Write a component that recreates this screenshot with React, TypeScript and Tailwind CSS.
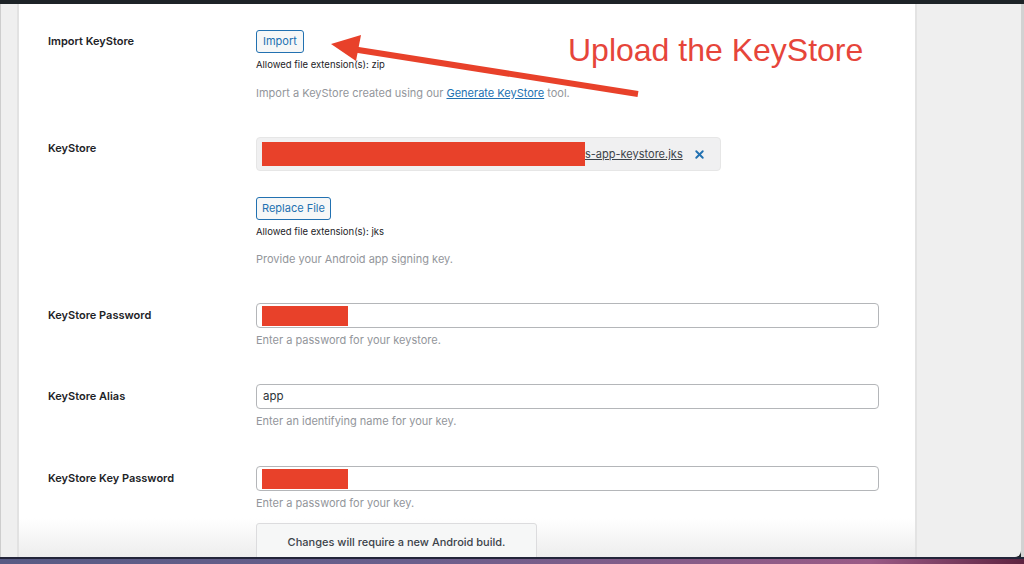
import { X } from 'lucide-react'

const font = { fontFamily: 'Inter, "Liberation Sans", sans-serif' }

function Label({ text, h }: { text: string; h: string }) {
  return (
    <div className={`w-[208px] shrink-0 flex items-center text-[11px] font-semibold text-[#1d2327] ${h}`}>
      {text}
    </div>
  )
}

function Redacted({ w }: { w: string }) {
  return <div className={`h-[20px] bg-[#e8412a] ${w}`} />
}

export default function App() {
  return (
    <div className="relative w-[1024px] h-[564px] overflow-hidden flex flex-col bg-[#1d2327]" style={font}>
      {/* top admin bar edge */}
      <div className="h-[4px] shrink-0 bg-[#1d2327]" />

      <div className="flex flex-1 min-h-0">
        {/* left menu strip */}
        <div className="w-[19px] shrink-0 bg-[#efefef] border-l border-[#cdcdcd] border-r-2 border-r-[#e2e2e2]" />

        {/* main settings panel */}
        <div className="w-[896px] shrink-0 bg-[linear-gradient(to_bottom,#ffffff_0%,#ffffff_93%,#ededed_100%)] pl-[29px] pt-[26px]">
          {/* import keystore */}
          <div className="flex">
            <Label text="Import KeyStore" h="h-[23px]" />
            <div className="flex flex-col items-start">
              <button className="h-[23px] px-[6px] rounded-[3px] border border-[#2271b1] bg-[#f6f7f7] text-[11px] text-[#2271b1]">
                Import
              </button>
              <p className="mt-[5px] text-[9.5px] leading-[13px] text-[#1d2327]">Allowed file extension(s): zip</p>
              <p className="mt-[14px] text-[11px] leading-[16px] text-[#93969b]">
                Import a KeyStore created using our{' '}
                <span className="text-[#2271b1] underline">Generate KeyStore</span> tool.
              </p>
            </div>
          </div>

          {/* keystore file */}
          <div className="flex mt-[36px]">
            <Label text="KeyStore" h="h-[22px]" />
            <div className="flex flex-col items-start">
              <div className="w-[465px] h-[34px] rounded-[4px] bg-[#f0f0f1] border border-[#e6e6e6] flex items-center pl-[5px] pr-[14px]">
                <div className="w-[323px] h-[24px] bg-[#e8412a]" />
                <span className="text-[11px] text-[#3c434a] underline">s-app-keystore.jks</span>
                <X size={13} strokeWidth={3.5} className="ml-auto text-[#2271b1]" />
              </div>
              <button className="mt-[26px] h-[23px] px-[5px] rounded-[3px] border border-[#2271b1] bg-[#f6f7f7] text-[11px] text-[#2271b1]">
                Replace File
              </button>
              <p className="mt-[5px] text-[9.5px] leading-[13px] text-[#1d2327]">Allowed file extension(s): jks</p>
              <p className="mt-[13px] text-[11px] leading-[16px] text-[#93969b]">Provide your Android app signing key.</p>
            </div>
          </div>

          {/* password */}
          <div className="flex mt-[36px]">
            <Label text="KeyStore Password" h="h-[25px]" />
            <div className="flex flex-col items-start">
              <div className="w-[623px] h-[25px] rounded-[4px] border border-[#b4b6b9] bg-white flex items-center pl-[5px]">
                <Redacted w="w-[86px]" />
              </div>
              <p className="mt-[4px] text-[11px] leading-[16px] text-[#93969b]">Enter a password for your keystore.</p>
            </div>
          </div>

          {/* alias */}
          <div className="flex mt-[36px]">
            <Label text="KeyStore Alias" h="h-[25px]" />
            <div className="flex flex-col items-start">
              <div className="w-[623px] h-[25px] rounded-[4px] border border-[#b4b6b9] bg-white flex items-center pl-[6px] text-[11.5px] text-[#2c3338]">
                app
              </div>
              <p className="mt-[4px] text-[11px] leading-[16px] text-[#93969b]">Enter an identifying name for your key.</p>
            </div>
          </div>

          {/* key password */}
          <div className="flex mt-[37px]">
            <Label text="KeyStore Key Password" h="h-[25px]" />
            <div className="flex flex-col items-start">
              <div className="w-[623px] h-[25px] rounded-[4px] border border-[#b4b6b9] bg-white flex items-center pl-[5px]">
                <Redacted w="w-[86px]" />
              </div>
              <p className="mt-[4px] text-[11px] leading-[16px] text-[#93969b]">Enter a password for your key.</p>
              <div className="mt-[12px] w-[281px] rounded-[3px] border border-[#dcdcde] bg-[#f6f7f7] pt-[10px] pb-[14px] text-center text-[11px] leading-[16px] font-medium text-[#3c434a]">
                Changes will require a new Android build.
              </div>
            </div>
          </div>
        </div>

        {/* right sidebar */}
        <div className="flex-1 bg-[#efefef] border-l-2 border-[#e3e3e3] rounded-br-[6px]" />
        <div className="w-[3px] shrink-0 bg-[#d2d2d2]" />
      </div>

      {/* dock edge */}
      <div className="h-[7px] shrink-0 border-t-2 border-[#23253a] bg-[linear-gradient(to_right,#585b84_0%,#6a5f8c_40%,#9a5a86_85%,#5e2340_100%)]" />

      {/* annotation */}
      <svg className="absolute left-0 top-0 pointer-events-none" width="1024" height="564">
        <line x1="352" y1="49" x2="638" y2="94" stroke="#e8412a" strokeWidth="6" />
        <polygon points="331,44 361,35 356,61" fill="#e8412a" />
      </svg>
      <div className="absolute left-[568px] top-[30px] text-[32px] leading-[40px] text-[#e6453a]" style={{ fontFamily: '"Liberation Sans", Arial, sans-serif' }}>
        Upload the KeyStore
      </div>
    </div>
  )
}
